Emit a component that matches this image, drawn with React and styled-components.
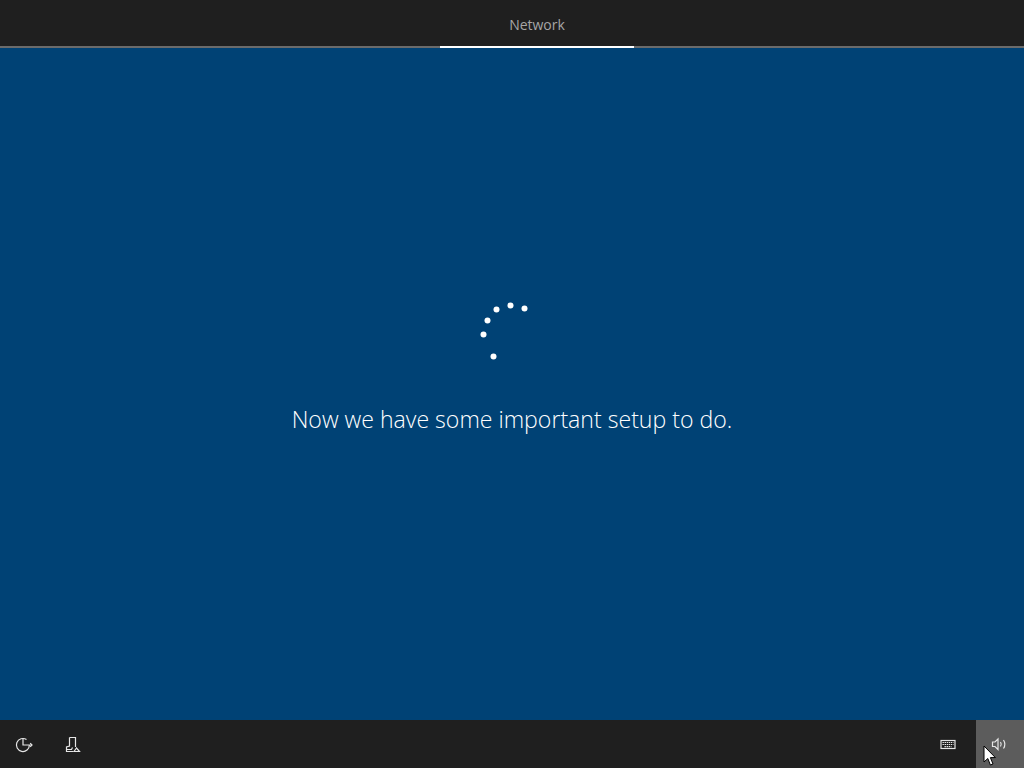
import React from 'react';
import styled, { createGlobalStyle } from 'styled-components';

const Global = createGlobalStyle`
    html, body, #root {
        margin: 0;
        padding: 0;
        height: 100%;
    }
    body {
        overflow: hidden;
        background: #004275;
    }
`;

const Page = styled.div`
    position: relative;
    display: flex;
    flex-direction: column;
    width: 1024px;
    height: 768px;
    background-color: #004275;
    font-family: 'Open Sans', 'Noto Sans', 'Liberation Sans', sans-serif;
`;

const TopBar = styled.header`
    display: flex;
    height: 46px;
    padding-left: 440px;
    background-color: #1f1f1f;
    border-bottom: 2px solid #6b6b6b;
`;

const Tab = styled.div`
    width: 194px;
    height: 48px;
    box-sizing: border-box;
    padding-top: 15px;
    border-bottom: 2px solid #ffffff;
    text-align: center;
    font-size: 14px;
    line-height: 20px;
    color: #a6a6a6;
`;

const Main = styled.main`
    flex: 1;
    display: flex;
    flex-direction: column;
    align-items: center;
    padding-top: 252px;
`;

const Spinner = styled.svg`
    display: block;
    width: 60px;
    height: 70px;
    margin-left: -16px;
`;

const Message = styled.h1`
    margin: 33px 0 0;
    font-size: 23.1px;
    font-weight: 300;
    line-height: 32px;
    color: #ffffff;
    white-space: nowrap;
`;

const BottomBar = styled.footer`
    display: flex;
    align-items: stretch;
    justify-content: space-between;
    height: 48px;
    background-color: #1f1f1f;
`;

const Group = styled.div`
    display: flex;
`;

const IconButton = styled.button`
    display: flex;
    align-items: center;
    justify-content: center;
    box-sizing: border-box;
    width: 48px;
    height: 48px;
    padding: 0 ${(p) => p.$inset || 0}px 0 0;
    border: 0;
    background-color: ${(p) => (p.$hover ? '#5c5c5c' : 'transparent')};
    color: #e6e6e6;
`;

const Icon = styled.svg`
    display: block;
    width: 20px;
    height: 20px;
    fill: none;
    stroke: currentColor;
    stroke-width: 1.2;
`;

const Cursor = styled.svg`
    position: absolute;
    left: 983px;
    top: 745px;
    width: 14px;
    height: 22px;
`;

// positions of the spinner dots inside the 60x70 box
const dots = [
    [19, 56], [9, 34], [13, 20], [22, 9], [36, 5], [50, 8],
];

export default function App() {
    return (
        <Page>
            <Global />
            <TopBar>
                <Tab>Network</Tab>
            </TopBar>
            <Main>
                <Spinner viewBox="0 0 60 70">
                    {dots.map(([x, y]) => (
                        <circle key={x} cx={x + 0.5} cy={y + 0.5} r="3" fill="#ffffff" />
                    ))}
                </Spinner>
                <Message>Now we have some important setup to do.</Message>
            </Main>
            <BottomBar>
                <Group>
                    <IconButton aria-label="Ease of access">
                        <Icon viewBox="0 0 20 20">
                            <path d="M12.5 5.6A6.5 6.5 0 1 0 15.4 11" />
                            <path d="M9 4.5V11H18" />
                            <path d="M16.2 9.2L18 11L16.2 12.8" />
                        </Icon>
                    </IconButton>
                    <IconButton aria-label="Microphone">
                        <Icon viewBox="0 0 20 20">
                            <path d="M7.5 3.5H13.5V13" />
                            <path d="M7.5 3.5V12L4.5 13V17.5H11.5" />
                            <path d="M5 15.5H9.5L10.5 13.5" />
                            <path d="M12 17.5L14.5 14L17.5 17.5Z" />
                        </Icon>
                    </IconButton>
                </Group>
                <Group>
                    <IconButton $inset={9} aria-label="Keyboard">
                        <Icon viewBox="0 0 20 20">
                            <rect x="3" y="6.5" width="14" height="8" />
                            <path d="M4.5 8.5H15.5M4.5 10.5H15.5M6.5 12.7H13.5" strokeDasharray="1.4 0.7" />
                        </Icon>
                    </IconButton>
                    <IconButton $hover aria-label="Volume">
                        <Icon viewBox="0 0 20 20">
                            <path d="M2.5 8H5L8 5V15.5L5 12.5H2.5Z" />
                            <path d="M10.5 8C11.5 9.5 11.5 11 10.5 12.5" />
                            <path d="M13.5 6C15.3 8.8 15.3 11.7 13.5 14.5" />
                        </Icon>
                    </IconButton>
                </Group>
            </BottomBar>
            <Cursor viewBox="0 0 14 22">
                <path d="M1 1V17L4.8 13.5L7.4 20L10 19L7.4 12.6H12.4Z" fill="#ffffff" stroke="#000000" strokeWidth="1" />
            </Cursor>
        </Page>
    );
}
